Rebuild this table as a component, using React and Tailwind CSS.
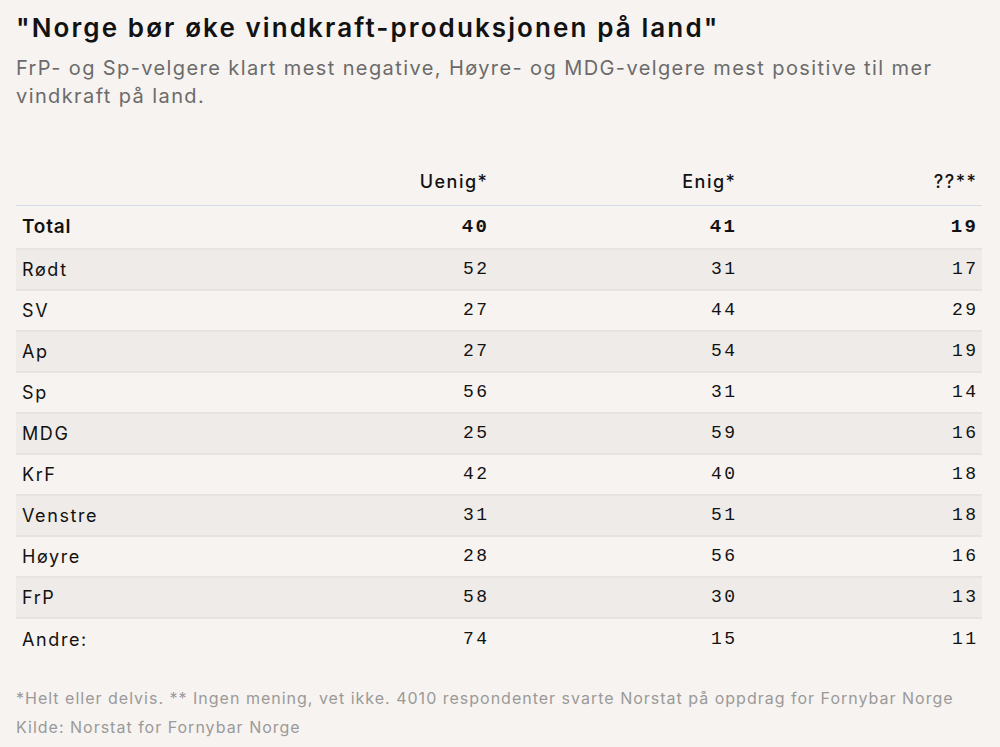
const rows = [
  ["Rødt", 52, 31, 17],
  ["SV", 27, 44, 29],
  ["Ap", 27, 54, 19],
  ["Sp", 56, 31, 14],
  ["MDG", 25, 59, 16],
  ["KrF", 42, 40, 18],
  ["Venstre", 31, 51, 18],
  ["Høyre", 28, 56, 16],
  ["FrP", 58, 30, 13],
  ["Andre:", 74, 15, 11],
];

const num = "text-right pl-[6px] pr-[3.5px] font-['Liberation_Mono',monospace] tracking-[2.5px]";

const App = () => {
  return (
    <div className="min-h-[747px] bg-[#f7f3f0] px-4 pt-[10px] font-['Inter',sans-serif] text-[#121212]">
      <h1 className="text-[26px] leading-[36px] font-semibold tracking-[2.1px]">
        "Norge bør øke vindkraft-produksjonen på land"
      </h1>
      <p className="mt-[8px] text-[20px] leading-[28px] text-[#6b6b6b] tracking-[1.4px]">
        FrP- og Sp-velgere klart mest negative, Høyre- og MDG-velgere mest positive til mer vindkraft på land.
      </p>

      <div className="mt-[48px] w-[966px]">
        <div className="grid grid-cols-[229px_248px_248px_241px] h-[48px] items-center border-b border-[#d3dde7] text-[18px] font-medium tracking-[1.5px]">
          <div />
          <div className="text-right pl-[6px] pr-[4.5px]">Uenig*</div>
          <div className="text-right pl-[6px] pr-[4.5px]">Enig*</div>
          <div className="text-right pl-[6px] pr-[4.5px]">??**</div>
        </div>

        <div className="grid grid-cols-[229px_248px_248px_241px] h-[44px] items-center border-b-2 border-[#e8e3df] text-[19px] font-semibold">
          <div className="px-[6px] tracking-[0.8px]">Total</div>
          <div className={num}>40</div>
          <div className={num}>41</div>
          <div className={num}>19</div>
        </div>

        {rows.map((r, i) => (
          <div
            key={r[0]}
            className={`grid grid-cols-[229px_248px_248px_241px] h-[41px] items-center text-[18px] ${
              i === rows.length - 1 ? "" : "border-b-2 border-[#e8e3df]"
            } ${i % 2 === 0 ? "bg-[#efebe8]" : ""}`}
          >
            <div className="px-[6px] tracking-[1.6px]">{r[0]}</div>
            <div className={num}>{r[1]}</div>
            <div className={num}>{r[2]}</div>
            <div className={num}>{r[3]}</div>
          </div>
        ))}
      </div>

      <div className="mt-[24px] text-[16px] leading-[29px] text-[#9a9a9a] tracking-[1px]">
        <p>*Helt eller delvis. ** Ingen mening, vet ikke. 4010 respondenter svarte Norstat på oppdrag for Fornybar Norge</p>
        <p>Kilde: Norstat for Fornybar Norge</p>
      </div>
    </div>
  );
};

export default App;
